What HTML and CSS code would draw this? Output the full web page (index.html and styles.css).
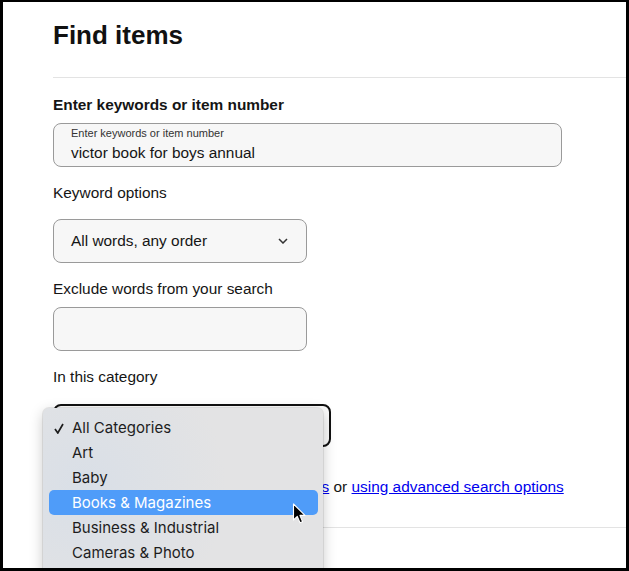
FILE: index.html
```html
<!DOCTYPE html>
<html lang="en">
<head>
    <meta charset="UTF-8">
    <meta name="viewport" content="width=device-width, initial-scale=1.0">
    <title>Find items</title>
    <link rel="stylesheet" href="styles.css">
</head>
<body>
    <div class="frame">
        <main class="page">
            <h1 class="title">Find items</h1>
            <hr class="rule">

            <div class="label label-bold">Enter keywords or item number</div>
            <div class="textbox textbox-wide">
                <span class="hint">Enter keywords or item number</span>
                <span class="value">victor book for boys annual</span>
            </div>

            <div class="label">Keyword options</div>
            <div class="select">
                <span>All words, any order</span>
                <svg class="chevron" width="10" height="6" viewBox="0 0 10 6"><path d="M1 1 L5 5 L9 1" fill="none" stroke="#333" stroke-width="1.5"/></svg>
            </div>

            <div class="label">Exclude words from your search</div>
            <div class="textbox textbox-short"></div>

            <div class="label">In this category</div>
            <div class="select select-focus">
                <svg class="chevron" width="10" height="6" viewBox="0 0 10 6"><path d="M1 1 L5 5 L9 1" fill="none" stroke="#333" stroke-width="1.5"/></svg>
            </div>

            <p class="more">Narrow down results with <a href="#">category filters</a> or <a href="#">using advanced search options</a></p>
            <hr class="rule rule-low">
        </main>

        <!-- open category list -->
        <ul class="menu">
            <li class="menu-item">
                <svg class="check" width="10" height="11" viewBox="0 0 10 11"><path d="M1 6 L3.8 10 L9 1" fill="none" stroke="#1d1d1d" stroke-width="1.7"/></svg>
                All Categories
            </li>
            <li class="menu-item">Art</li>
            <li class="menu-item">Baby</li>
            <li class="menu-item active">Books &amp; Magazines</li>
            <li class="menu-item">Business &amp; Industrial</li>
            <li class="menu-item">Cameras &amp; Photo</li>
        </ul>

        <svg class="cursor" width="14" height="22" viewBox="0 0 14 22"><path d="M1.5 1 L1.5 17 L5.3 13.4 L8 19.8 L10.6 18.7 L7.9 12.4 L13 12.4 Z" fill="#000" stroke="#fff" stroke-width="1.1" stroke-linejoin="round"/></svg>
    </div>
</body>
</html>
```

FILE: styles.css
```css
body {
    margin: 0;
    font-family: "Liberation Sans", Arial, sans-serif;
    font-size: 15.4px;
    color: #151515;
    background: #fff;
}
.frame {
    position: relative;
    width: 629px;
    height: 571px;
    box-sizing: border-box;
    border: 3px solid #000;
    border-top-width: 2px;
    overflow: hidden;
    background: #fff;
}
.page {
    padding: 18px 0 0 50px;
}
.title {
    margin: 0;
    font-size: 26px;
    line-height: 30px;
    font-weight: bold;
    color: #111;
}
.rule {
    margin: 27px 0 0;
    border: 0;
    border-top: 1px solid #e3e3e3;
}
.rule-low {
    margin-top: 31px;
}
.label {
    line-height: 18px;
    margin-top: 17px;
}
.label-bold {
    font-weight: bold;
    margin-top: 18px;
}
.textbox {
    box-sizing: border-box;
    height: 44px;
    margin-top: 9px;
    padding: 3px 17px 0;
    border: 1px solid #9a9a9a;
    border-radius: 8px;
    background: #f7f7f7;
}
.textbox-wide {
    width: 509px;
}
.textbox-short {
    width: 254px;
}
.hint {
    display: block;
    font-size: 11px;
    line-height: 13px;
    color: #333;
}
.value {
    display: block;
    margin-top: 4px;
    line-height: 18px;
}
.select {
    box-sizing: border-box;
    width: 254px;
    height: 44px;
    margin-top: 17px;
    padding: 0 18px 0 17px;
    display: flex;
    align-items: center;
    justify-content: space-between;
    border: 1px solid #9a9a9a;
    border-radius: 8px;
    background: #f7f7f7;
}
.select-focus {
    width: 278px;
    height: 43px;
    margin-top: 18px;
    padding: 0 17px 0 16px;
    justify-content: flex-end;
    border: 2px solid #111;
    background: #fafafa;
}
.more {
    margin: 31px 0 0;
    line-height: 18px;
}
.more a {
    color: #0000ee;
}
.menu {
    position: absolute;
    left: 40px;
    top: 406px;
    width: 280px;
    height: 180px;
    box-sizing: border-box;
    margin: 0;
    padding: 7px 0 0;
    list-style: none;
    border-radius: 6px 6px 0 0;
    background: radial-gradient(circle at 15% 45%, #d9dfe7 0, #e3e3e4 55%), #e3e3e3;
    box-shadow: 0 0 0 1px rgba(0, 0, 0, 0.08), 0 4px 14px rgba(0, 0, 0, 0.22);
    font-family: Inter, "Liberation Sans", sans-serif;
    font-size: 15px;
    color: #1d1d1d;
}
.menu-item {
    position: relative;
    height: 25px;
    line-height: 25px;
    margin: 0 5px 0 6px;
    padding-left: 23px;
    border-radius: 5px;
}
.menu-item.active {
    background: #4f9cf9;
    color: #fff;
}
.check {
    position: absolute;
    left: 5px;
    top: 8px;
}
.cursor {
    position: absolute;
    left: 289px;
    top: 501px;
}
```
